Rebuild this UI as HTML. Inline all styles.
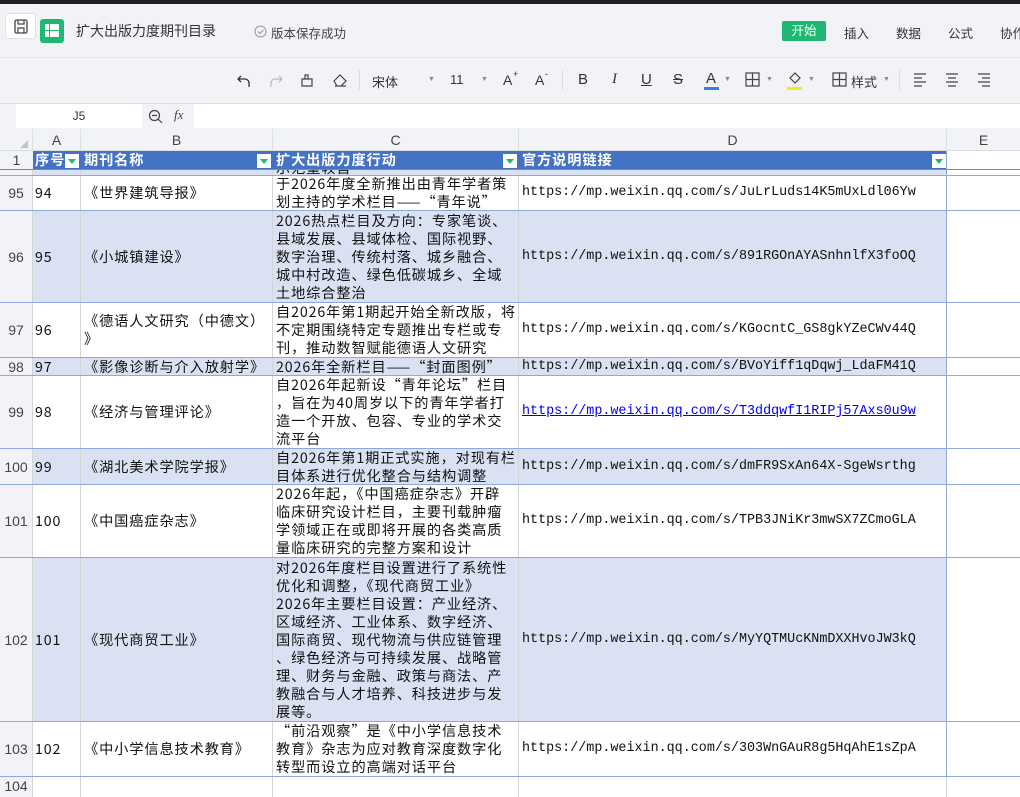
<!DOCTYPE html>
<html><head><meta charset="utf-8"><style>
*{margin:0;padding:0;box-sizing:border-box}
body{width:1020px;height:790px;overflow:hidden;background:#fff;font-family:"Liberation Sans","Noto Sans CJK SC",sans-serif;position:relative}
.abs{position:absolute;white-space:nowrap}
.top{left:0;top:0;width:1020px;height:4px;background:#1f1f1f}
.hdr{left:0;top:4px;width:1020px;height:54px;background:#f2f3f7;border-bottom:1px solid #e2e4ea}
.tb{left:0;top:58px;width:1020px;height:46px;background:#f2f3f7;border-bottom:1px solid #dfe1e6}
.fb{left:0;top:104px;width:1020px;height:25px;background:#f2f3f7}
.ch{left:0;top:129px;width:1020px;height:22px;background:#f2f3f7;border-bottom:1px solid #d8dbe0}
.ch div{position:absolute;top:0;height:22px;line-height:22px;text-align:center;font-size:14px;color:#444;border-right:1px solid #dcdfe4}
.row{position:absolute;left:0;width:1020px;border-bottom:1px solid #8ea9db}
.row>div{position:absolute;top:0;bottom:0;display:flex;align-items:center;font-size:14.2px;letter-spacing:0.9px;color:#111;font-family:"Noto Sans CJK SC",sans-serif;line-height:18px;overflow:hidden;border-right:1px solid #d4d4d4}
.rh{left:0;width:33px;background:#f2f3f7;justify-content:center;color:#444!important;font-size:14px!important;letter-spacing:0!important;font-family:"Liberation Sans",sans-serif!important}
.a{left:33px;width:48px;padding-left:2px}
.b{left:81px;width:192px;padding-left:3px}
.c{left:273px;width:246px;padding-left:3px;white-space:nowrap}
.d{left:519px;width:428px;padding-left:3px;font-family:"Liberation Mono",monospace!important;font-size:13.4px!important;letter-spacing:0!important;border-right:1px solid #8ea9db!important}
.e{left:947px;width:73px;border-right:none!important}
.blue .a,.blue .b,.blue .c,.blue .d{background:#d9e1f2}
.ic{font-size:13px;color:#333}
.arr{font-size:7px;color:#888}
</style></head><body>
<div class="abs top"></div>
<div class="abs hdr">
 <div class="abs" style="left:5px;top:9px;width:31px;height:26px;background:#fff;border:1px solid #dfe1e6;border-radius:3px">
  <svg width="31" height="26" viewBox="0 0 31 26"><rect x="9" y="6" width="12" height="13" rx="1.5" fill="none" stroke="#444" stroke-width="1.3"/><path d="M12 6v4h6V6M12 19v-5h6v5" fill="none" stroke="#444" stroke-width="1.2"/></svg>
 </div>
 <div class="abs" style="left:40px;top:15px;width:24px;height:24px;background:#1fb872;border-radius:3px">
  <svg width="24" height="24"><rect x="5" y="5" width="4" height="6" fill="#fff"/><rect x="10" y="5" width="9" height="6" fill="#fff"/><rect x="5" y="12" width="4" height="6" fill="#fff"/><rect x="10" y="12" width="9" height="6" fill="#fff"/></svg>
 </div>
 <div class="abs" style="left:76px;top:17px;font-size:14px;color:#333">扩大出版力度期刊目录</div>
 <svg class="abs" style="left:254px;top:21px" width="13" height="13"><circle cx="6.5" cy="6.5" r="5.5" fill="none" stroke="#999"/><path d="M4 6.5l2 2 3.5-3.5" fill="none" stroke="#999"/></svg>
 <div class="abs" style="left:271px;top:19px;font-size:12.5px;color:#444">版本保存成功</div>
 <div class="abs" style="left:782px;top:17px;width:44px;height:20px;background:#1fb872;border-radius:2px;color:#fff;font-size:12.5px;text-align:center;line-height:20px">开始</div>
 <div class="abs" style="left:844px;top:19px;font-size:12.5px;color:#333">插入</div>
 <div class="abs" style="left:896px;top:19px;font-size:12.5px;color:#333">数据</div>
 <div class="abs" style="left:948px;top:19px;font-size:12.5px;color:#333">公式</div>
 <div class="abs" style="left:1000px;top:19px;font-size:12.5px;color:#333">协作</div>
</div>
<div class="abs tb">
 <svg class="abs" style="left:236px;top:15px" width="16" height="16"><path d="M5 3L2 6l3 3M2 6h7a4 4 0 0 1 4 4v4" fill="none" stroke="#333" stroke-width="1.3"/></svg>
 <svg class="abs" style="left:268px;top:15px" width="16" height="16"><path d="M11 3l3 3-3 3M14 6H7a4 4 0 0 0-4 4v4" fill="none" stroke="#bbb" stroke-width="1.3"/></svg>
 <svg class="abs" style="left:299px;top:14px" width="16" height="16"><path d="M3 14h10V7H3z M6 7V3h3v4" fill="none" stroke="#444" stroke-width="1.2"/></svg>
 <svg class="abs" style="left:332px;top:14px" width="16" height="16"><path d="M2 9l6-6 6 6-5 5H5z M3 14h11" fill="none" stroke="#444" stroke-width="1.2"/></svg>
 <div class="abs" style="left:359px;top:12px;width:1px;height:20px;background:#ddd"></div>
 <div class="abs ic" style="left:372px;top:14px">宋体</div>
 <div class="abs arr" style="left:428px;top:18px">▼</div>
 <div class="abs ic" style="left:450px;top:14px">11</div>
 <div class="abs arr" style="left:481px;top:18px">▼</div>
 <div class="abs ic" style="left:503px;top:14px;font-size:14px">A</div><div class="abs" style="left:513px;top:11px;font-size:9px;color:#333">+</div>
 <div class="abs ic" style="left:535px;top:14px;font-size:14px">A</div><div class="abs" style="left:545px;top:11px;font-size:9px;color:#333">-</div>
 <div class="abs" style="left:562px;top:12px;width:1px;height:20px;background:#ddd"></div>
 <div class="abs ic" style="left:578px;top:13px;font-size:15px">B</div>
 <div class="abs ic" style="left:612px;top:13px;font-size:15px;font-style:italic;font-family:'Liberation Serif'">I</div>
 <div class="abs ic" style="left:641px;top:13px;font-size:15px;text-decoration:underline">U</div>
 <div class="abs ic" style="left:673px;top:13px;font-size:15px;text-decoration:line-through">S</div>
 <div class="abs ic" style="left:706px;top:12px;font-size:15px">A</div>
 <div class="abs" style="left:704px;top:29px;width:15px;height:3px;background:#3e7be0"></div>
 <div class="abs arr" style="left:724px;top:18px">▼</div>
 <svg class="abs" style="left:745px;top:14px" width="15" height="15"><path d="M1 1h13v13H1z M7.5 1v13 M1 7.5h13" fill="none" stroke="#444" stroke-width="1.2"/></svg>
 <div class="abs arr" style="left:766px;top:18px">▼</div>
 <svg class="abs" style="left:787px;top:12px" width="16" height="16"><path d="M3 8l5-5 5 5-5 5z" fill="none" stroke="#444" stroke-width="1.2"/></svg>
 <div class="abs" style="left:787px;top:29px;width:15px;height:3px;background:#f5ee00"></div>
 <div class="abs arr" style="left:808px;top:18px">▼</div>
 <svg class="abs" style="left:832px;top:14px" width="15" height="15"><path d="M1 1h13v13H1z M7.5 1v13 M1 7.5h13" fill="none" stroke="#444" stroke-width="1.2"/></svg>
 <div class="abs ic" style="left:851px;top:14px">样式</div>
 <div class="abs arr" style="left:883px;top:18px">▼</div>
 <div class="abs" style="left:899px;top:12px;width:1px;height:20px;background:#ddd"></div>
 <svg class="abs" style="left:913px;top:15px" width="80" height="14"><path d="M1 1h12M1 5h8M1 9h12M1 13h8 M33 1h12M35 5h8M33 9h12M35 13h8 M65 1h12M69 5h8M65 9h12M69 13h8" stroke="#444" stroke-width="1.2"/></svg>
</div>
<div class="abs fb">
 <div class="abs" style="left:16px;top:0;width:126px;height:24px;background:#fff;font-size:12px;color:#333;text-align:center;line-height:24px">J5</div>
 <svg class="abs" style="left:148px;top:5px" width="16" height="16"><circle cx="6.5" cy="6.5" r="5" fill="none" stroke="#444" stroke-width="1.2"/><path d="M10 10l4 4M4 6.5h5" stroke="#444" stroke-width="1.2"/></svg>
 <div class="abs" style="left:174px;top:3px;font-size:13px;font-style:italic;font-family:'Liberation Serif';color:#444">fx</div>
 <div class="abs" style="left:194px;top:0;width:826px;height:24px;background:#fff"></div>
</div>
<div class="abs ch">
 <div style="left:0;width:33px"><svg width="33" height="22"><path d="M28 19V11L20 19z" fill="#c0c4cc"/></svg></div>
 <div style="left:33px;width:48px">A</div><div style="left:81px;width:192px">B</div><div style="left:273px;width:246px">C</div><div style="left:519px;width:428px">D</div><div style="left:947px;width:73px;border:none">E</div>
</div>
<div class="row" style="top:151px;height:19px;border-bottom:1.5px solid #3cb371">
 <div class="rh" style="border:none">1</div>
 <div class="a" style="background:#4472c4;color:#fff;font-weight:bold;border-right:none">序号</div>
 <div class="b" style="background:#4472c4;color:#fff;font-weight:bold;border-right:none">期刊名称</div>
 <div class="c" style="background:#4472c4;color:#fff;font-weight:bold;border-right:none">扩大出版力度行动</div>
 <div class="d" style="background:#4472c4;color:#fff;font-weight:bold;font-family:'Noto Sans CJK SC',sans-serif!important;font-size:14.2px!important;letter-spacing:0.9px!important">官方说明链接</div>
 <div class="e"></div>
</div>
<div class="abs" style="left:65px;top:154px;width:14px;height:14px;background:#fff"><svg width="14" height="14"><path d="M3 5h8l-4 5z" fill="#1fb872"/></svg></div>
<div class="abs" style="left:257px;top:154px;width:14px;height:14px;background:#fff"><svg width="14" height="14"><path d="M3 5h8l-4 5z" fill="#1fb872"/></svg></div>
<div class="abs" style="left:503px;top:154px;width:14px;height:14px;background:#fff"><svg width="14" height="14"><path d="M3 5h8l-4 5z" fill="#1fb872"/></svg></div>
<div class="abs" style="left:932px;top:154px;width:14px;height:14px;background:#fff"><svg width="14" height="14"><path d="M3 5h8l-4 5z" fill="#1fb872"/></svg></div>
<div class="row blue" style="top:170px;height:6px">
 <div class="rh"></div><div class="a"></div><div class="b"></div>
 <div class="c" style="align-items:flex-end"><span style="margin-bottom:-2px">示范量较首</span></div><div class="d"></div><div class="e"></div>
</div>
<div class="row" style="top:176px;height:35px">
 <div class="rh">95</div><div class="a">94</div><div class="b">《世界建筑导报》</div>
 <div class="c">于2026年度全新推出由青年学者策<br>划主持的学术栏目——“青年说”</div>
 <div class="d">https://mp.weixin.qq.com/s/JuLrLuds14K5mUxLdl06Yw</div><div class="e"></div>
</div>
<div class="row blue" style="top:211px;height:92px">
 <div class="rh">96</div><div class="a">95</div><div class="b">《小城镇建设》</div>
 <div class="c">2026热点栏目及方向：专家笔谈、<br>县域发展、县域体检、国际视野、<br>数字治理、传统村落、城乡融合、<br>城中村改造、绿色低碳城乡、全域<br>土地综合整治</div>
 <div class="d">https://mp.weixin.qq.com/s/891RGOnAYASnhnlfX3foOQ</div><div class="e"></div>
</div>
<div class="row" style="top:303px;height:55px">
 <div class="rh">97</div><div class="a">96</div><div class="b">《德语人文研究（中德文）<br>》</div>
 <div class="c">自2026年第1期起开始全新改版，将<br>不定期围绕特定专题推出专栏或专<br>刊，推动数智赋能德语人文研究</div>
 <div class="d">https://mp.weixin.qq.com/s/KGocntC_GS8gkYZeCWv44Q</div><div class="e"></div>
</div>
<div class="row blue" style="top:358px;height:18px">
 <div class="rh">98</div><div class="a">97</div><div class="b">《影像诊断与介入放射学》</div>
 <div class="c">2026年全新栏目——“封面图例”</div>
 <div class="d">https://mp.weixin.qq.com/s/BVoYiff1qDqwj_LdaFM41Q</div><div class="e"></div>
</div>
<div class="row" style="top:376px;height:73px">
 <div class="rh">99</div><div class="a">98</div><div class="b">《经济与管理评论》</div>
 <div class="c">自2026年起新设“青年论坛”栏目<br>，旨在为40周岁以下的青年学者打<br>造一个开放、包容、专业的学术交<br>流平台</div>
 <div class="d" style="color:#0000ee;text-decoration:underline">https://mp.weixin.qq.com/s/T3ddqwfI1RIPj57Axs0u9w</div><div class="e"></div>
</div>
<div class="row blue" style="top:449px;height:36px">
 <div class="rh">100</div><div class="a">99</div><div class="b">《湖北美术学院学报》</div>
 <div class="c">自2026年第1期正式实施，对现有栏<br>目体系进行优化整合与结构调整</div>
 <div class="d">https://mp.weixin.qq.com/s/dmFR9SxAn64X-SgeWsrthg</div><div class="e"></div>
</div>
<div class="row" style="top:485px;height:73px">
 <div class="rh">101</div><div class="a">100</div><div class="b">《中国癌症杂志》</div>
 <div class="c">2026年起，《中国癌症杂志》开辟<br>临床研究设计栏目，主要刊载肿瘤<br>学领域正在或即将开展的各类高质<br>量临床研究的完整方案和设计</div>
 <div class="d">https://mp.weixin.qq.com/s/TPB3JNiKr3mwSX7ZCmoGLA</div><div class="e"></div>
</div>
<div class="row blue" style="top:558px;height:164px">
 <div class="rh">102</div><div class="a">101</div><div class="b">《现代商贸工业》</div>
 <div class="c">对2026年度栏目设置进行了系统性<br>优化和调整，《现代商贸工业》<br>2026年主要栏目设置：产业经济、<br>区域经济、工业体系、数字经济、<br>国际商贸、现代物流与供应链管理<br>、绿色经济与可持续发展、战略管<br>理、财务与金融、政策与商法、产<br>教融合与人才培养、科技进步与发<br>展等。</div>
 <div class="d">https://mp.weixin.qq.com/s/MyYQTMUcKNmDXXHvoJW3kQ</div><div class="e"></div>
</div>
<div class="row" style="top:722px;height:55px">
 <div class="rh">103</div><div class="a">102</div><div class="b">《中小学信息技术教育》</div>
 <div class="c">“前沿观察”是《中小学信息技术<br>教育》杂志为应对教育深度数字化<br>转型而设立的高端对话平台</div>
 <div class="d">https://mp.weixin.qq.com/s/303WnGAuR8g5HqAhE1sZpA</div><div class="e"></div>
</div>
<div class="row" style="top:777px;height:20px;border:none">
 <div class="rh" style="align-items:flex-start">104</div><div class="a"></div><div class="b"></div><div class="c"></div><div class="d" style="border-right:1px solid #d4d4d4!important"></div><div class="e"></div>
</div>
</body></html>
